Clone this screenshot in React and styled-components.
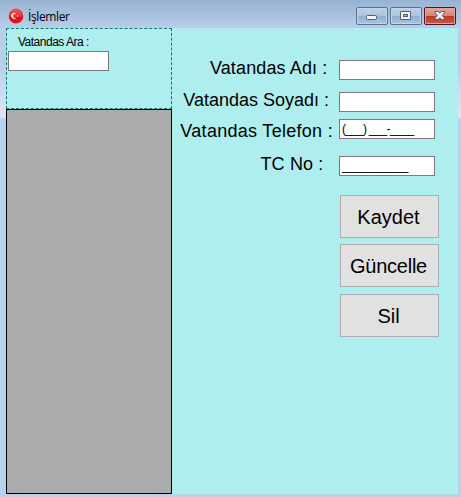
import React from "react";
import styled, { createGlobalStyle } from "styled-components";

const GlobalStyle = createGlobalStyle`
  * { box-sizing: border-box; }
  body { margin: 0; overflow: hidden; }
`;

const Window = styled.div`
  width: 461px;
  height: 497px;
  display: flex;
  flex-direction: column;
  padding: 0 3px 3px 6px;
  background: linear-gradient(180deg, #99b4d1 0, #b9d1ea 28px, #b7cdea 60px, #dce6f4 117px, #b9d1ea 119px, #b9d1ea 100%);
  font-family: "Liberation Sans", Arial, sans-serif;
  color: #000;
`;

const TitleBar = styled.header`
  height: 28px;
  flex: none;
  display: flex;
  align-items: flex-start;
  margin: 0 -3px 0 -6px;
  padding: 7px 5px 0 8px;
  background: linear-gradient(180deg, #98b3d1, #b8cfea);
`;

const AppIcon = styled.svg`
  width: 16px;
  height: 16px;
  margin-top: 1px;
  flex: none;
`;

const Title = styled.span`
  flex: 1;
  margin-left: 4px;
  padding-top: 1px;
  font: 12px/18px "Open Sans", "Noto Sans", sans-serif;
  letter-spacing: -0.38px;
`;

const Controls = styled.div`
  display: flex;
  gap: 2px;
`;

const ControlButton = styled.button`
  width: 32px;
  height: 18px;
  padding: 0;
  display: flex;
  align-items: center;
  justify-content: center;
  border: 1px solid ${(p) => (p.$danger ? "#4a1526" : "#5a7290")};
  border-radius: 2px;
  box-shadow: inset 0 0 0 1px ${(p) => (p.$danger ? "#dda49b" : "#c3d6e9")};
  background: ${(p) =>
    p.$danger
      ? "linear-gradient(180deg, #e4a699 0, #d98473 47%, #b83c24 50%, #c9583f 100%)"
      : "linear-gradient(180deg, #bdd1e6 0, #adc5de 47%, #92aecb 50%, #a9c4e0 100%)"};
`;

const Client = styled.main`
  flex: 1;
  min-height: 0;
  display: flex;
  background: #afeeee;
`;

const Sidebar = styled.aside`
  width: 166px;
  display: flex;
  flex-direction: column;
`;

const SearchPanel = styled.section`
  height: 81px;
  flex: none;
  display: flex;
  flex-direction: column;
  padding: 7px 1px 0;
  border: 1px dashed #167575;
`;

const SearchLabel = styled.label`
  height: 15px;
  padding-left: 10px;
  font-size: 12px;
  line-height: 13px;
  white-space: nowrap;
  letter-spacing: -0.5px;
`;

const DataGrid = styled.section`
  flex: 1;
  border: 1px solid #000;
  background: #ababab;
`;

const TextBox = styled.input`
  width: ${(p) => p.$width}px;
  height: 20px;
  flex: none;
  margin: 0;
  padding: 0 2px;
  border: 1px solid #7a7a7a;
  border-radius: 0;
  outline: none;
  background: #fff;
  color: #000;
  font: 12px/16px "Liberation Sans", Arial, sans-serif;
  letter-spacing: ${(p) => p.$spacing || 0}px;
`;

const Form = styled.form`
  flex: 1;
  display: flex;
  flex-direction: column;
  padding: 32px 20px 0 0;
`;

const Field = styled.div`
  display: flex;
  align-items: flex-start;
  justify-content: flex-end;
  height: 20px;
  margin-bottom: ${(p) => p.$after}px;
  padding-right: 3px;
`;

const FieldLabel = styled.label`
  font-size: 18px;
  line-height: 20px;
  white-space: nowrap;
  margin-top: ${(p) => p.$shift}px;
  margin-right: ${(p) => p.$gap}px;
  letter-spacing: ${(p) => p.$spacing}px;
`;

const Actions = styled.div`
  display: flex;
  flex-direction: column;
  align-items: flex-end;
  margin-right: -1px;
`;

const ActionButton = styled.button`
  width: 99px;
  height: 43px;
  margin: 0 0 ${(p) => p.$after || 0}px;
  padding: 1px 2px 0 0;
  border: 1px solid #adadad;
  background: #e1e1e1;
  color: #000;
  font: 20px "Liberation Sans", Arial, sans-serif;
  letter-spacing: ${(p) => p.$spacing || 0}px;
`;

const FIELDS = [
  { label: "Vatandas Adı :", value: "", after: 12, shift: -2, gap: 11.5, spacing: 0.13 },
  { label: "Vatandas Soyadı :", value: "", after: 7, shift: -2, gap: 10, spacing: 0 },
  { label: "Vatandas Telefon :", value: "(___) ___-____", after: 17, shift: 2, gap: 6, spacing: 0.29, inputSpacing: -0.76 },
  { label: "TC No :", value: "___________", after: 19, shift: -2, gap: 15.5, spacing: 0.15, inputSpacing: -0.71 },
];

const ACTIONS = [
  { label: "Kaydet", after: 6, spacing: 0 },
  { label: "Güncelle", after: 7, spacing: -0.25 },
  { label: "Sil", spacing: 0 },
];

const FlagIcon = () => (
  <AppIcon viewBox="0 0 16 16">
    <defs>
      <linearGradient id="flag" x1="0" y1="0" x2="0" y2="1">
        <stop offset="0" stopColor="#ee5555" />
        <stop offset="0.5" stopColor="#e6353a" />
        <stop offset="0.6" stopColor="#dc1119" />
        <stop offset="1" stopColor="#e31620" />
      </linearGradient>
    </defs>
    <circle cx="8" cy="8" r="7.4" fill="url(#flag)" />
    <path d="M8 5.7A2.8 2.8 0 1 0 8 10A2.3 2.3 0 1 1 8 5.700Z" fill="#fff" stroke="#fff" strokeWidth=".3" />
    <path d="M8.300 7.900l.9-.3.4-.6.3.6.9.3-.8.4v.7l-.7-.4z" fill="#ffd9d9" />
  </AppIcon>
);

const MinimizeGlyph = () => (
  <svg width="30" height="16">
    <rect x="9.5" y="7.5" width="10" height="4" rx="1" fill="#f4f4f0" stroke="#535e70" />
  </svg>
);

const MaximizeGlyph = () => (
  <svg width="30" height="16">
    <rect x="9.5" y="3.5" width="10" height="8" rx="0.5" fill="#f4f4f0" stroke="#535e70" />
    <rect x="12.5" y="6.5" width="4" height="2" fill="#9cb6d0" stroke="#535e70" />
  </svg>
);

const CloseGlyph = () => (
  <svg width="30" height="16">
    <path
      d="M10 3.500h3.200l1.600 1.700 1.600-1.700h3.200v1.200L17.200 7.500l2.400 2.800v1.200h-3.200l-1.600-1.700-1.600 1.700H10v-1.200l2.400-2.800L10 4.700z"
      fill="#f1f1f3"
      stroke="#535666"
    />
  </svg>
);

export default function App() {
  return (
    <>
      <GlobalStyle />
      <Window>
        <TitleBar>
          <FlagIcon />
          <Title>İşlemler</Title>
          <Controls>
            <ControlButton aria-label="Simge durumuna küçült"><MinimizeGlyph /></ControlButton>
            <ControlButton aria-label="Ekranı kapla"><MaximizeGlyph /></ControlButton>
            <ControlButton $danger aria-label="Kapat"><CloseGlyph /></ControlButton>
          </Controls>
        </TitleBar>
        <Client>
          <Sidebar>
            <SearchPanel>
              <SearchLabel>Vatandas Ara :</SearchLabel>
              <TextBox $width={101} aria-label="Vatandas Ara" />
            </SearchPanel>
            <DataGrid />
          </Sidebar>
          <Form>
            {FIELDS.map((f) => (
              <Field key={f.label} $after={f.after}>
                <FieldLabel $shift={f.shift} $gap={f.gap} $spacing={f.spacing}>{f.label}</FieldLabel>
                <TextBox $width={96} $spacing={f.inputSpacing} defaultValue={f.value} />
              </Field>
            ))}
            <Actions>
              {ACTIONS.map((a) => (
                <ActionButton key={a.label} type="button" $after={a.after} $spacing={a.spacing}>{a.label}</ActionButton>
              ))}
            </Actions>
          </Form>
        </Client>
      </Window>
    </>
  );
}
